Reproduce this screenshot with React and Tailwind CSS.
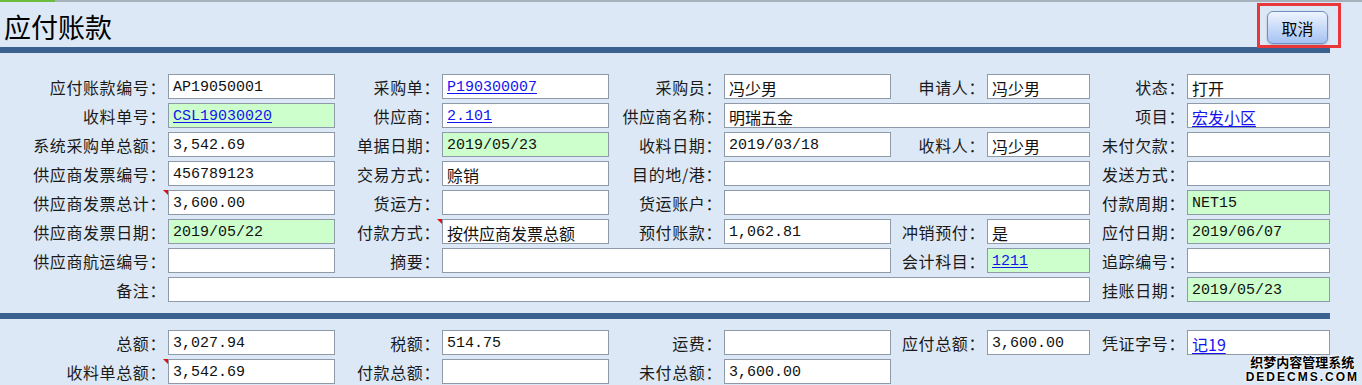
import React from 'react';

const cjk = { fontFamily: '"Noto Sans CJK SC", "Noto Sans", sans-serif' };
const mono = { fontFamily: '"Liberation Mono", "Noto Sans CJK SC", monospace' };

const top = [
  [
    { label: '应付账款编号', value: 'AP19050001' },
    { label: '采购单', value: 'P190300007', link: true },
    { label: '采购员', value: '冯少男' },
    { label: '申请人', value: '冯少男' },
    { label: '状态', value: '打开' },
  ],
  [
    { label: '收料单号', value: 'CSL19030020', link: true, green: true },
    { label: '供应商', value: '2.101', link: true },
    { label: '供应商名称', value: '明瑞五金', span: 'col-span-3' },
    { label: '项目', value: '宏发小区', link: true },
  ],
  [
    { label: '系统采购单总额', value: '3,542.69' },
    { label: '单据日期', value: '2019/05/23', green: true },
    { label: '收料日期', value: '2019/03/18' },
    { label: '收料人', value: '冯少男' },
    { label: '未付欠款', value: '' },
  ],
  [
    { label: '供应商发票编号', value: '456789123' },
    { label: '交易方式', value: '赊销' },
    { label: '目的地/港', value: '', span: 'col-span-3' },
    { label: '发送方式', value: '' },
  ],
  [
    { label: '供应商发票总计', value: '3,600.00', mark: true },
    { label: '货运方', value: '' },
    { label: '货运账户', value: '', span: 'col-span-3' },
    { label: '付款周期', value: 'NET15', green: true },
  ],
  [
    { label: '供应商发票日期', value: '2019/05/22', green: true },
    { label: '付款方式', value: '按供应商发票总额', mark: true },
    { label: '预付账款', value: '1,062.81' },
    { label: '冲销预付', value: '是' },
    { label: '应付日期', value: '2019/06/07', green: true },
  ],
  [
    { label: '供应商航运编号', value: '' },
    { label: '摘要', value: '', span: 'col-span-3' },
    { label: '会计科目', value: '1211', link: true, green: true },
    { label: '追踪编号', value: '' },
  ],
  [
    { label: '备注', value: '', span: 'col-span-7' },
    { label: '挂账日期', value: '2019/05/23', green: true },
  ],
];

const bottom = [
  [
    { label: '总额', value: '3,027.94' },
    { label: '税额', value: '514.75' },
    { label: '运费', value: '' },
    { label: '应付总额', value: '3,600.00' },
    { label: '凭证字号', value: '记19', link: true },
  ],
  [
    { label: '收料单总额', value: '3,542.69', mark: true },
    { label: '付款总额', value: '' },
    { label: '未付总额', value: '3,600.00' },
  ],
];

const isCjk = (s) => /[^\x00-\x7f]/.test(s);

const Field = ({ f }) => (
  <>
    <div
      className="relative flex items-center justify-end pr-[2px] text-[16px] leading-none tracking-[0.6px] text-[#1a1a1a]"
      style={cjk}
    >
      {f.label}：
      {f.mark && (
        <span className="absolute top-0 right-0 w-0 h-0 border-t-[5px] border-t-[#e01010] border-l-[5px] border-l-transparent" />
      )}
    </div>
    <div
      className={`${f.span || ''} flex items-center h-[25px] border border-[#8e9aa8] pl-[4px] overflow-hidden whitespace-nowrap leading-none ${
        isCjk(f.value) ? 'text-[16px] pt-[2px]' : 'text-[15px] pt-[1px]'
      } ${f.green ? 'bg-[#ccffcc]' : 'bg-white'} ${
        f.link ? 'text-[#1414f0] underline underline-offset-2' : 'text-[#111]'
      }`}
      style={isCjk(f.value) ? cjk : mono}
    >
      {f.value}
    </div>
  </>
);

const Grid = ({ rows }) => (
  <div className="grid grid-cols-[168px_167px_107px_167px_115px_167px_96px_103px_97px_143px] gap-y-[4px] w-[1330px]">
    {rows.map((row, i) => (
      <React.Fragment key={i}>
        {row.map((f) => (
          <Field key={f.label} f={f} />
        ))}
      </React.Fragment>
    ))}
  </div>
);

export default function App() {
  return (
    <div className="relative w-[1362px] h-[385px] overflow-hidden bg-[#dce8f5]">
      {/* top strip */}
      <div className="h-[2px] bg-[#a7b1bb] flex">
        <div className="w-[55px] bg-[#6cbd3e]" />
      </div>

      {/* header */}
      <div className="w-[1330px] h-[45px] flex items-center justify-between">
        <h1 className="pl-[4px] pt-[4px] text-[27px] leading-none text-black" style={cjk}>
          应付账款
        </h1>
        <button
          className="mr-[2px] mt-[6px] w-[61px] h-[33px] rounded-[6px] border border-[#6f8fc4] bg-gradient-to-b from-[#eef4fe] to-[#a6c2f2] text-[16px] leading-none text-black shadow-[0_1px_2px_rgba(0,0,0,0.25)]"
          style={cjk}
        >
          取消
        </button>
      </div>
      <div className="w-[1330px] h-[6px] bg-[#3a6190]" />

      <div className="pt-[21px] pb-[11px]">
        <Grid rows={top} />
      </div>

      <div className="w-[1330px] h-[6px] bg-[#3a6190]" />

      <div className="pt-[11px]">
        <Grid rows={bottom} />
      </div>

      {/* annotation box */}
      <div className="absolute left-[1257px] top-[3px] w-[84px] h-[45px] border-[3px] border-[#e8363a]" />

      {/* watermark */}
      <div
        className="absolute right-[3px] bottom-[2px] flex flex-col items-center leading-none text-black font-bold [text-shadow:0_0_2px_#fff,0_0_2px_#fff,0_0_2px_#fff]"
        style={cjk}
      >
        <span className="text-[13px]">织梦内容管理系统</span>
        <span className="text-[12px] tracking-[2px] mt-[3px]" style={{ fontFamily: '"Liberation Sans", sans-serif' }}>
          DEDECMS.COM
        </span>
      </div>
    </div>
  );
}
